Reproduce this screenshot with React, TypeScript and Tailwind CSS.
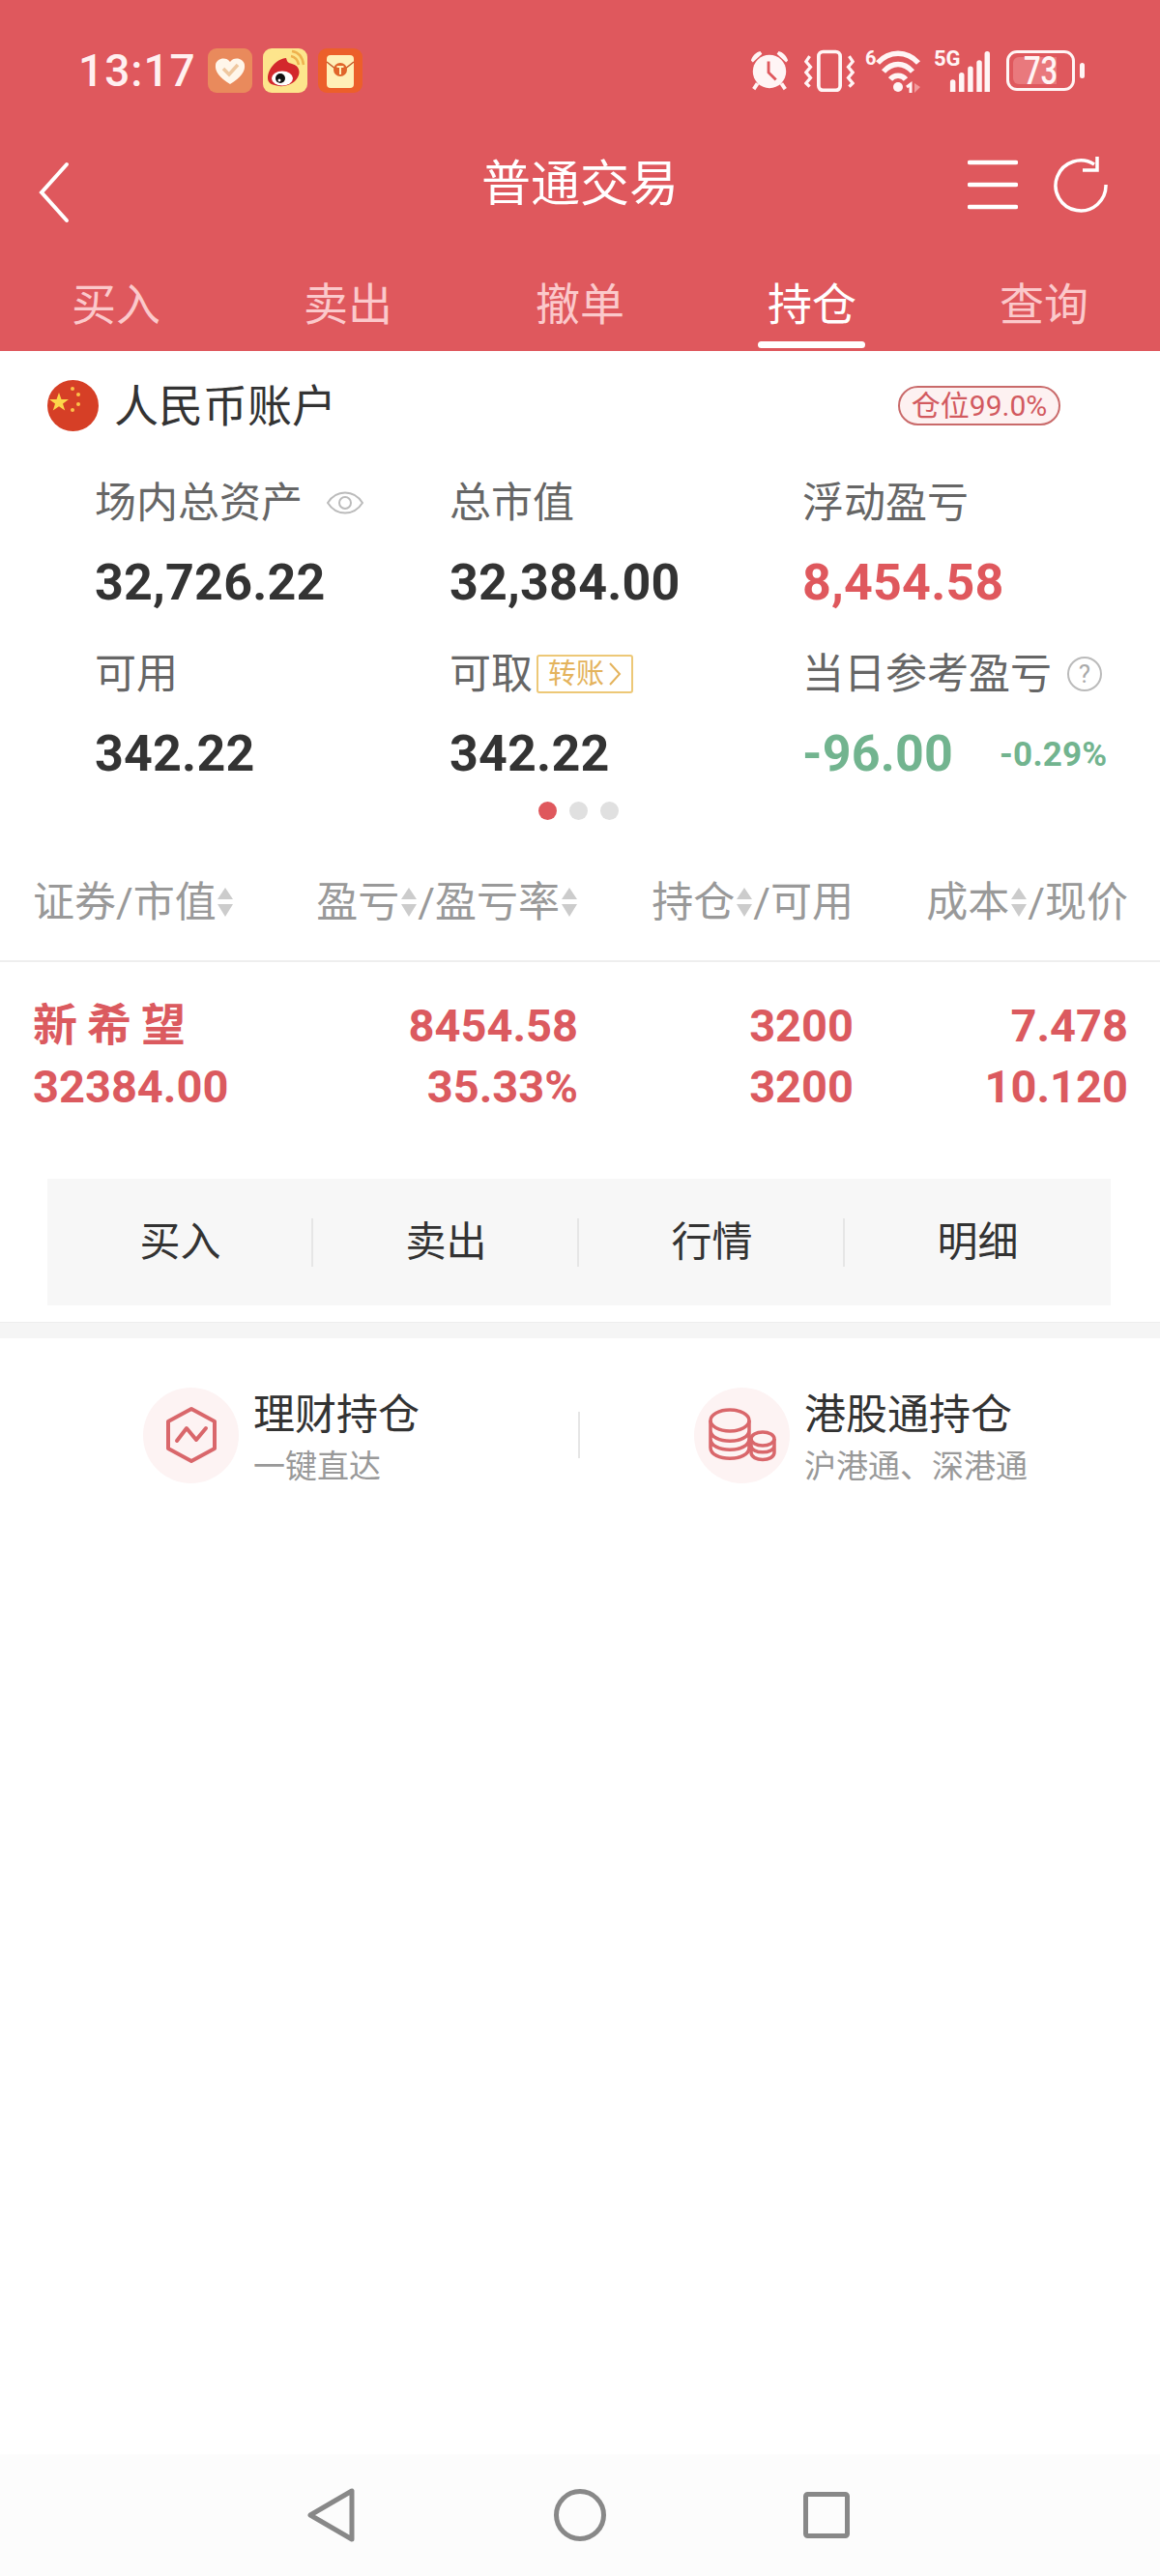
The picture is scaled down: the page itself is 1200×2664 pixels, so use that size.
import { ReactNode } from 'react';

const cjk = "font-['Roboto','Noto_Sans_CJK_SC',sans-serif]";

// shared column widths for the holdings table, right edges 598 / 883 / 1167
const tableCols = 'grid grid-cols-[270px_294px_285px_284px] pl-[34px]';

function SortArrows() {
  return (
    <svg width="18" height="32" viewBox="0 0 18 32" className="shrink-0 mx-[0.5px]">
      <path d="M9 1 L17 13 H1 Z M1 18 H17 L9 31 Z" fill="#cccccc" />
    </svg>
  );
}

function StatusBar() {
  return (
    <div className="flex items-center justify-between h-[146px] pl-[81px] pr-[78px]">
      <div className="flex items-center">
        <span className="text-[46px] leading-none font-medium text-[#fff0f0] tracking-[1px]">13:17</span>
        <div className="flex items-center gap-[11px] ml-[12px]">
          {/* app notification icons */}
          <svg width="46" height="46" viewBox="0 0 46 46">
            <rect width="46" height="46" rx="9" fill="#e98a5c" />
            <path d="M23 37 C12 30 7 24 8 17 C9 10 19 8 23 14 C27 8 37 10 38 17 C39 24 34 30 23 37 Z" fill="#fff6ea" />
            <path d="M16 21 L22 27 L31 17" fill="none" stroke="#efc79f" strokeWidth="3.5" />
          </svg>
          <svg width="46" height="46" viewBox="0 0 46 46">
            <rect width="46" height="46" rx="9" fill="#fde58c" />
            <path d="M5 31 C5 21 14 11 24 10 C25 14 26 15 30 16 C38 18 39 25 36 30 C32 38 20 41 12 38 C7 37 5 34 5 31 Z" fill="#d3282c" />
            <ellipse cx="20" cy="31" rx="11" ry="7.5" fill="#ffffff" />
            <circle cx="18" cy="31" r="5" fill="#111111" />
            <circle cx="17" cy="33" r="1.5" fill="#ffffff" />
            <path d="M29 8 C34 9 36 12 37 17 M30 3 C37 4 41 9 42 17" fill="none" stroke="#eeb24f" strokeWidth="2.5" />
          </svg>
          <svg width="46" height="46" viewBox="0 0 46 46">
            <rect width="46" height="46" rx="9" fill="#ec5f2a" />
            <rect x="9" y="7" width="28" height="34" rx="4" fill="#fff0b8" />
            <path d="M9 14 L23 25 L37 14" fill="none" stroke="#c55a2b" strokeWidth="1.5" />
            <circle cx="23" cy="22" r="7" fill="#e0652a" />
            <path d="M19.5 19 H26.5 M23 19 V27" stroke="#fff0b8" strokeWidth="2" />
          </svg>
        </div>
      </div>
      <div className="flex items-center">
        <svg width="44" height="44" viewBox="0 0 44 46" fill="#fff5f5">
          <circle cx="22" cy="24" r="18" />
          <path d="M21 13 V25 L29 33" fill="none" stroke="#df585d" strokeWidth="3" />
          <path d="M2 12 C4 6 8 3 12 2 L14 5 L4 14 Z M42 12 C40 6 36 3 32 2 L30 5 L40 14 Z" />
          <path d="M9 37 L5 43 M35 37 L39 43" stroke="#fff5f5" strokeWidth="4" />
        </svg>
        <svg width="52" height="44" viewBox="0 0 56 46" fill="none" stroke="#fff5f5" className="ml-[14px]">
          <rect x="16" y="2" width="24" height="43" rx="5" strokeWidth="4" />
          <path d="M6 7 L2 13 L7 19 L2 25 L7 31 L2 37 L6 41 M50 7 L54 13 L49 19 L54 25 L49 31 L54 37 L50 41" strokeWidth="3.5" />
        </svg>
        <svg width="62" height="50" viewBox="0 0 62 50" className="ml-[10px] overflow-visible">
          <text x="1" y="19" fontSize="20" fontWeight="700" fill="#fff5f5" fontFamily="Roboto">6</text>
          <path d="M14 17 C26 4 44 4 56 17 M20 26 C29 16 41 16 50 26 M27 34 C31 29 39 29 43 34" fill="none" stroke="#fff5f5" strokeWidth="5.5" />
          <circle cx="35" cy="42" r="5" fill="#fff5f5" />
          <path d="M44 42 L48 39 V48" fill="none" stroke="#fff5f5" strokeWidth="3" />
          <path d="M52 38 V48 L58 42 Z" fill="#f29a9c" />
        </svg>
        <div className="relative w-[60px] h-[44px] ml-[10px]">
          <span className="absolute left-0 top-[-2px] text-[22px] leading-[24px] font-bold text-[#fff5f5]">5G</span>
          <svg width="46" height="42" viewBox="0 0 46 46" className="absolute right-0 bottom-0">
            <path d="M1 35 a3 3 0 0 1 6 0 V46 H1 Z M11 27 a3 3 0 0 1 6 0 V46 H11 Z M21 20 a3 3 0 0 1 6 0 V46 H21 Z" fill="#fff5f5" />
            <path d="M31 13 a3 3 0 0 1 6 0 V46 H31 Z" fill="#fff5f5" />
            <path d="M40 3 a3 3 0 0 1 6 0 V46 H40 Z" fill="#fff5f5" />
          </svg>
        </div>
        <div className="relative flex items-center justify-center w-[71px] h-[42px] ml-[15px] border-[3px] border-[#fff5f5] rounded-[11px]">
          <div className="absolute left-[4px] top-[4px] bottom-[4px] w-[45px] rounded-l-[6px] bg-[#e9797d]" />
          <span className="relative text-[31px] leading-none font-medium text-[#fff5f5] scale-y-[1.3]">73</span>
        </div>
        <div className="w-[5px] h-[16px] ml-[5px] rounded-full bg-[#fff5f5]" />
      </div>
    </div>
  );
}

function NavBar() {
  return (
    <div className="relative flex items-center justify-between h-[86px] pl-[40px] pr-[53px]">
      <svg width="32" height="64" viewBox="0 0 32 64" fill="none" stroke="#ffffff" strokeWidth="4" strokeLinecap="round" className="mt-[20px]">
        <path d="M29 3 L3 32 L29 61" />
      </svg>
      <span className="absolute left-0 right-0 top-[19px] text-center text-[51px] leading-none text-white">普通交易</span>
      <div className="flex items-center gap-[36px] mt-[3px]">
        <svg width="52" height="52" viewBox="0 0 52 52" stroke="#ffffff" strokeWidth="4.5" strokeLinecap="round">
          <path d="M2 3 H50 M2 26 H50 M2 49 H50" />
        </svg>
        <svg width="58" height="60" viewBox="0 0 58 60" fill="none" stroke="#ffffff" strokeWidth="3.5">
          <path d="M55 30 A26 26 0 1 1 43 9 M46 1 V15 H31" />
        </svg>
      </div>
    </div>
  );
}

function Tabs() {
  const tabs = ['买入', '卖出', '撤单', '持仓', '查询'];
  return (
    <div className="grid grid-cols-5 h-[131px]">
      {tabs.map((t, i) => (
        <div key={t} className="relative flex justify-center pt-[53px]">
          <span className={i === 3 ? 'text-[46px] leading-[60px] text-white' : 'text-[46px] leading-[60px] text-[#fbc9cb]'}>{t}</span>
          {i === 3 && <div className="absolute bottom-[3px] left-[64px] w-[111px] h-[7px] rounded-full bg-white" />}
        </div>
      ))}
    </div>
  );
}

function Flag() {
  return (
    <svg width="53" height="53" viewBox="0 0 53 53" className="shrink-0">
      <circle cx="26.5" cy="26.5" r="26.5" fill="#d63f26" />
      <path d="M12 13 L14.5 20 L22 20 L16 24.5 L18.2 31.5 L12 27.2 L5.8 31.5 L8 24.5 L2 20 L9.5 20 Z" fill="#fcd74a" />
      <circle cx="26" cy="9" r="2" fill="#fcc24a" />
      <circle cx="32" cy="15" r="2" fill="#fcc24a" />
      <circle cx="32" cy="25" r="2" fill="#fcc24a" />
      <circle cx="26" cy="31" r="2" fill="#fcc24a" />
    </svg>
  );
}

function Stat({ label, value, extra, color = 'text-[#333333]' }: { label: ReactNode; value: ReactNode; extra?: ReactNode; color?: string }) {
  return (
    <div>
      <div className="flex items-center h-[60px] text-[43px] leading-none text-[#666666]">{label}</div>
      <div className={`flex items-center mt-[23px] h-[60px] text-[52px] leading-none font-bold tracking-[0.2px] ${color}`}>
        {value}
        {extra}
      </div>
    </div>
  );
}

function Summary() {
  return (
    <div className="relative h-[510px]">
      <div className="flex items-center justify-between pt-[30px] pl-[49px] pr-[103px]">
        <div className="flex items-center gap-[16px]">
          <Flag />
          <span className="text-[46px] leading-none text-[#333333]">人民币账户</span>
        </div>
        <span className="flex items-center justify-center w-[168px] h-[41px] rounded-full border-2 border-[#c96a6a] bg-[#fdf1f1] text-[30px] leading-none text-[#d25a5f]">仓位99.0%</span>
      </div>
      <div className="grid grid-cols-[367px_365px_1fr] gap-y-[34px] pl-[98px] mt-[44px]">
        <Stat
          label={
            <>
              场内总资产
              <svg width="38" height="28" viewBox="0 0 38 28" fill="none" stroke="#bbbbbb" strokeWidth="2" className="ml-[25px]">
                <path d="M1 14 C10 0 28 0 37 14 C28 28 10 28 1 14 Z" />
                <circle cx="19" cy="14" r="6" />
              </svg>
            </>
          }
          value="32,726.22"
        />
        <Stat label="总市值" value="32,384.00" />
        <Stat label="浮动盈亏" value="8,454.58" color="text-[#df585d]" />
        <Stat label="可用" value="342.22" />
        <Stat
          label={
            <>
              可取
              <span className="flex items-center ml-[4px] h-[40px] px-[10px] border-2 border-[#edc877] rounded-[3px] text-[29px] leading-none text-[#e4b35c]">
                转账
                <svg width="14" height="26" viewBox="0 0 14 26" fill="none" stroke="#e4b35c" strokeWidth="2" className="ml-[4px]">
                  <path d="M2 2 L12 13 L2 24" />
                </svg>
              </span>
            </>
          }
          value="342.22"
        />
        <Stat
          label={
            <>
              当日参考盈亏
              <span className="flex items-center justify-center w-[36px] h-[36px] ml-[16px] rounded-full border-2 border-[#bbbbbb] text-[26px] leading-none text-[#aaaaaa]">?</span>
            </>
          }
          value="-96.00"
          color="text-[#72b48f]"
          extra={<span className="ml-[48px] text-[35px] leading-none font-bold">-0.29%</span>}
        />
      </div>
      <div className="flex justify-center gap-[13px] mt-[19px] pr-[3px]">
        <div className="w-[19px] h-[19px] rounded-full bg-[#df585d]" />
        <div className="w-[19px] h-[19px] rounded-full bg-[#e0e0e0]" />
        <div className="w-[19px] h-[19px] rounded-full bg-[#e0e0e0]" />
      </div>
    </div>
  );
}

function TableHead() {
  return (
    <div className={`${tableCols} items-center h-[122px] border-b-2 border-[#eeeeee] text-[43px] leading-none text-[#999999]`}>
      <div className="flex items-center">证券/市值<SortArrows /></div>
      <div className="flex items-center justify-end whitespace-nowrap">盈亏<SortArrows />/盈亏率<SortArrows /></div>
      <div className="flex items-center justify-end whitespace-nowrap">持仓<SortArrows />/可用</div>
      <div className="flex items-center justify-end whitespace-nowrap">成本<SortArrows />/现价</div>
    </div>
  );
}

function HoldingRow() {
  const cols = [['8454.58', '35.33%'], ['3200', '3200'], ['7.478', '10.120']];
  return (
    <div className={`${tableCols} pt-[34px] h-[224px] text-[47px] leading-[63px] font-bold text-[#db5a5f]`}>
      <div>
        <div className="tracking-[10px] text-[46px]">新希望</div>
        <div>32384.00</div>
      </div>
      {cols.map((c) => (
        <div key={c[0]} className="text-right">
          <div>{c[0]}</div>
          <div>{c[1]}</div>
        </div>
      ))}
    </div>
  );
}

function ActionBar() {
  const items = ['买入', '卖出', '行情', '明细'];
  return (
    <div className="flex items-center h-[131px] ml-[49px] mr-[51px] bg-[#f7f7f7]">
      {items.map((t, i) => (
        <div key={t} className="flex flex-1 items-center justify-center relative text-[42px] leading-none text-[#333333]">
          {t}
          {i < 3 && <div className="absolute right-0 w-[2px] h-[50px] bg-[#e6e6e6]" />}
        </div>
      ))}
    </div>
  );
}

function Links() {
  return (
    <div className="flex items-center h-[160px] pt-[40px]">
      <div className="flex w-[598px] items-center pl-[148px]">
        <div className="flex items-center justify-center shrink-0 w-[99px] h-[99px] rounded-full bg-[#fdf3f3]">
          <svg width="54" height="60" viewBox="0 0 54 60" fill="none" stroke="#d9676b" strokeWidth="4" strokeLinejoin="round" strokeLinecap="round">
            <path d="M27 3 L51 16 V44 L27 57 L3 44 V16 Z" />
            <path d="M12 36 L22 23 L32 35 L42 23" />
          </svg>
        </div>
        <div className="ml-[15px] mt-[6px]">
          <div className="text-[43px] leading-[52px] text-[#333333]">理财持仓</div>
          <div className="text-[33px] leading-[40px] text-[#999999] mt-[8px]">一键直达</div>
        </div>
      </div>
      <div className="w-[2px] h-[48px] bg-[#e6e6e6]" />
      <div className="flex w-[598px] items-center pl-[118px]">
        <div className="flex items-center justify-center shrink-0 w-[99px] h-[99px] rounded-full bg-[#fdf3f3]">
          <svg width="70" height="56" viewBox="0 0 70 56" fill="none" stroke="#d9676b" strokeWidth="3.5">
            <ellipse cx="22" cy="13" rx="20" ry="11" />
            <path d="M2 13 V41 C2 56 42 56 42 41 V13 M2 23 C2 38 42 38 42 23 M2 32 C2 47 42 47 42 32" />
            <ellipse cx="56" cy="32" rx="12" ry="7" fill="#fdf3f3" />
            <path d="M44 32 V46 C44 56 68 56 68 46 V32 M44 39 C44 48 68 48 68 39" />
          </svg>
        </div>
        <div className="ml-[15px] mt-[6px]">
          <div className="text-[43px] leading-[52px] text-[#333333]">港股通持仓</div>
          <div className="text-[33px] leading-[40px] text-[#999999] mt-[8px]">沪港通、深港通</div>
        </div>
      </div>
    </div>
  );
}

function SystemNav() {
  return (
    <div className="flex items-center justify-center h-[126px] pr-[3px] bg-[#fcfcfc]">
      <svg width="50" height="56" viewBox="0 0 50 56" fill="none" stroke="#888888" strokeWidth="5" strokeLinejoin="round">
        <path d="M46 3 V53 L3 28 Z" />
      </svg>
      <svg width="54" height="54" viewBox="0 0 54 54" fill="none" stroke="#888888" strokeWidth="5" className="ml-[205px]">
        <circle cx="27" cy="27" r="24.5" />
      </svg>
      <svg width="48" height="48" viewBox="0 0 48 48" fill="none" stroke="#888888" strokeWidth="5" strokeLinejoin="round" className="ml-[204px]">
        <rect x="2.5" y="2.5" width="43" height="43" rx="2" />
      </svg>
    </div>
  );
}

export default function App() {
  return (
    <div className={`flex flex-col w-[1200px] h-[2664px] bg-white ${cjk}`}>
      <div className="bg-[#df585d]">
        <StatusBar />
        <NavBar />
        <Tabs />
      </div>
      <Summary />
      <TableHead />
      <HoldingRow />
      <ActionBar />
      <div className="h-[17px] mt-[17px] bg-[#f5f5f5] border-t border-[#eeeeee]" />
      <Links />
      <div className="flex-1" />
      <SystemNav />
    </div>
  );
}
